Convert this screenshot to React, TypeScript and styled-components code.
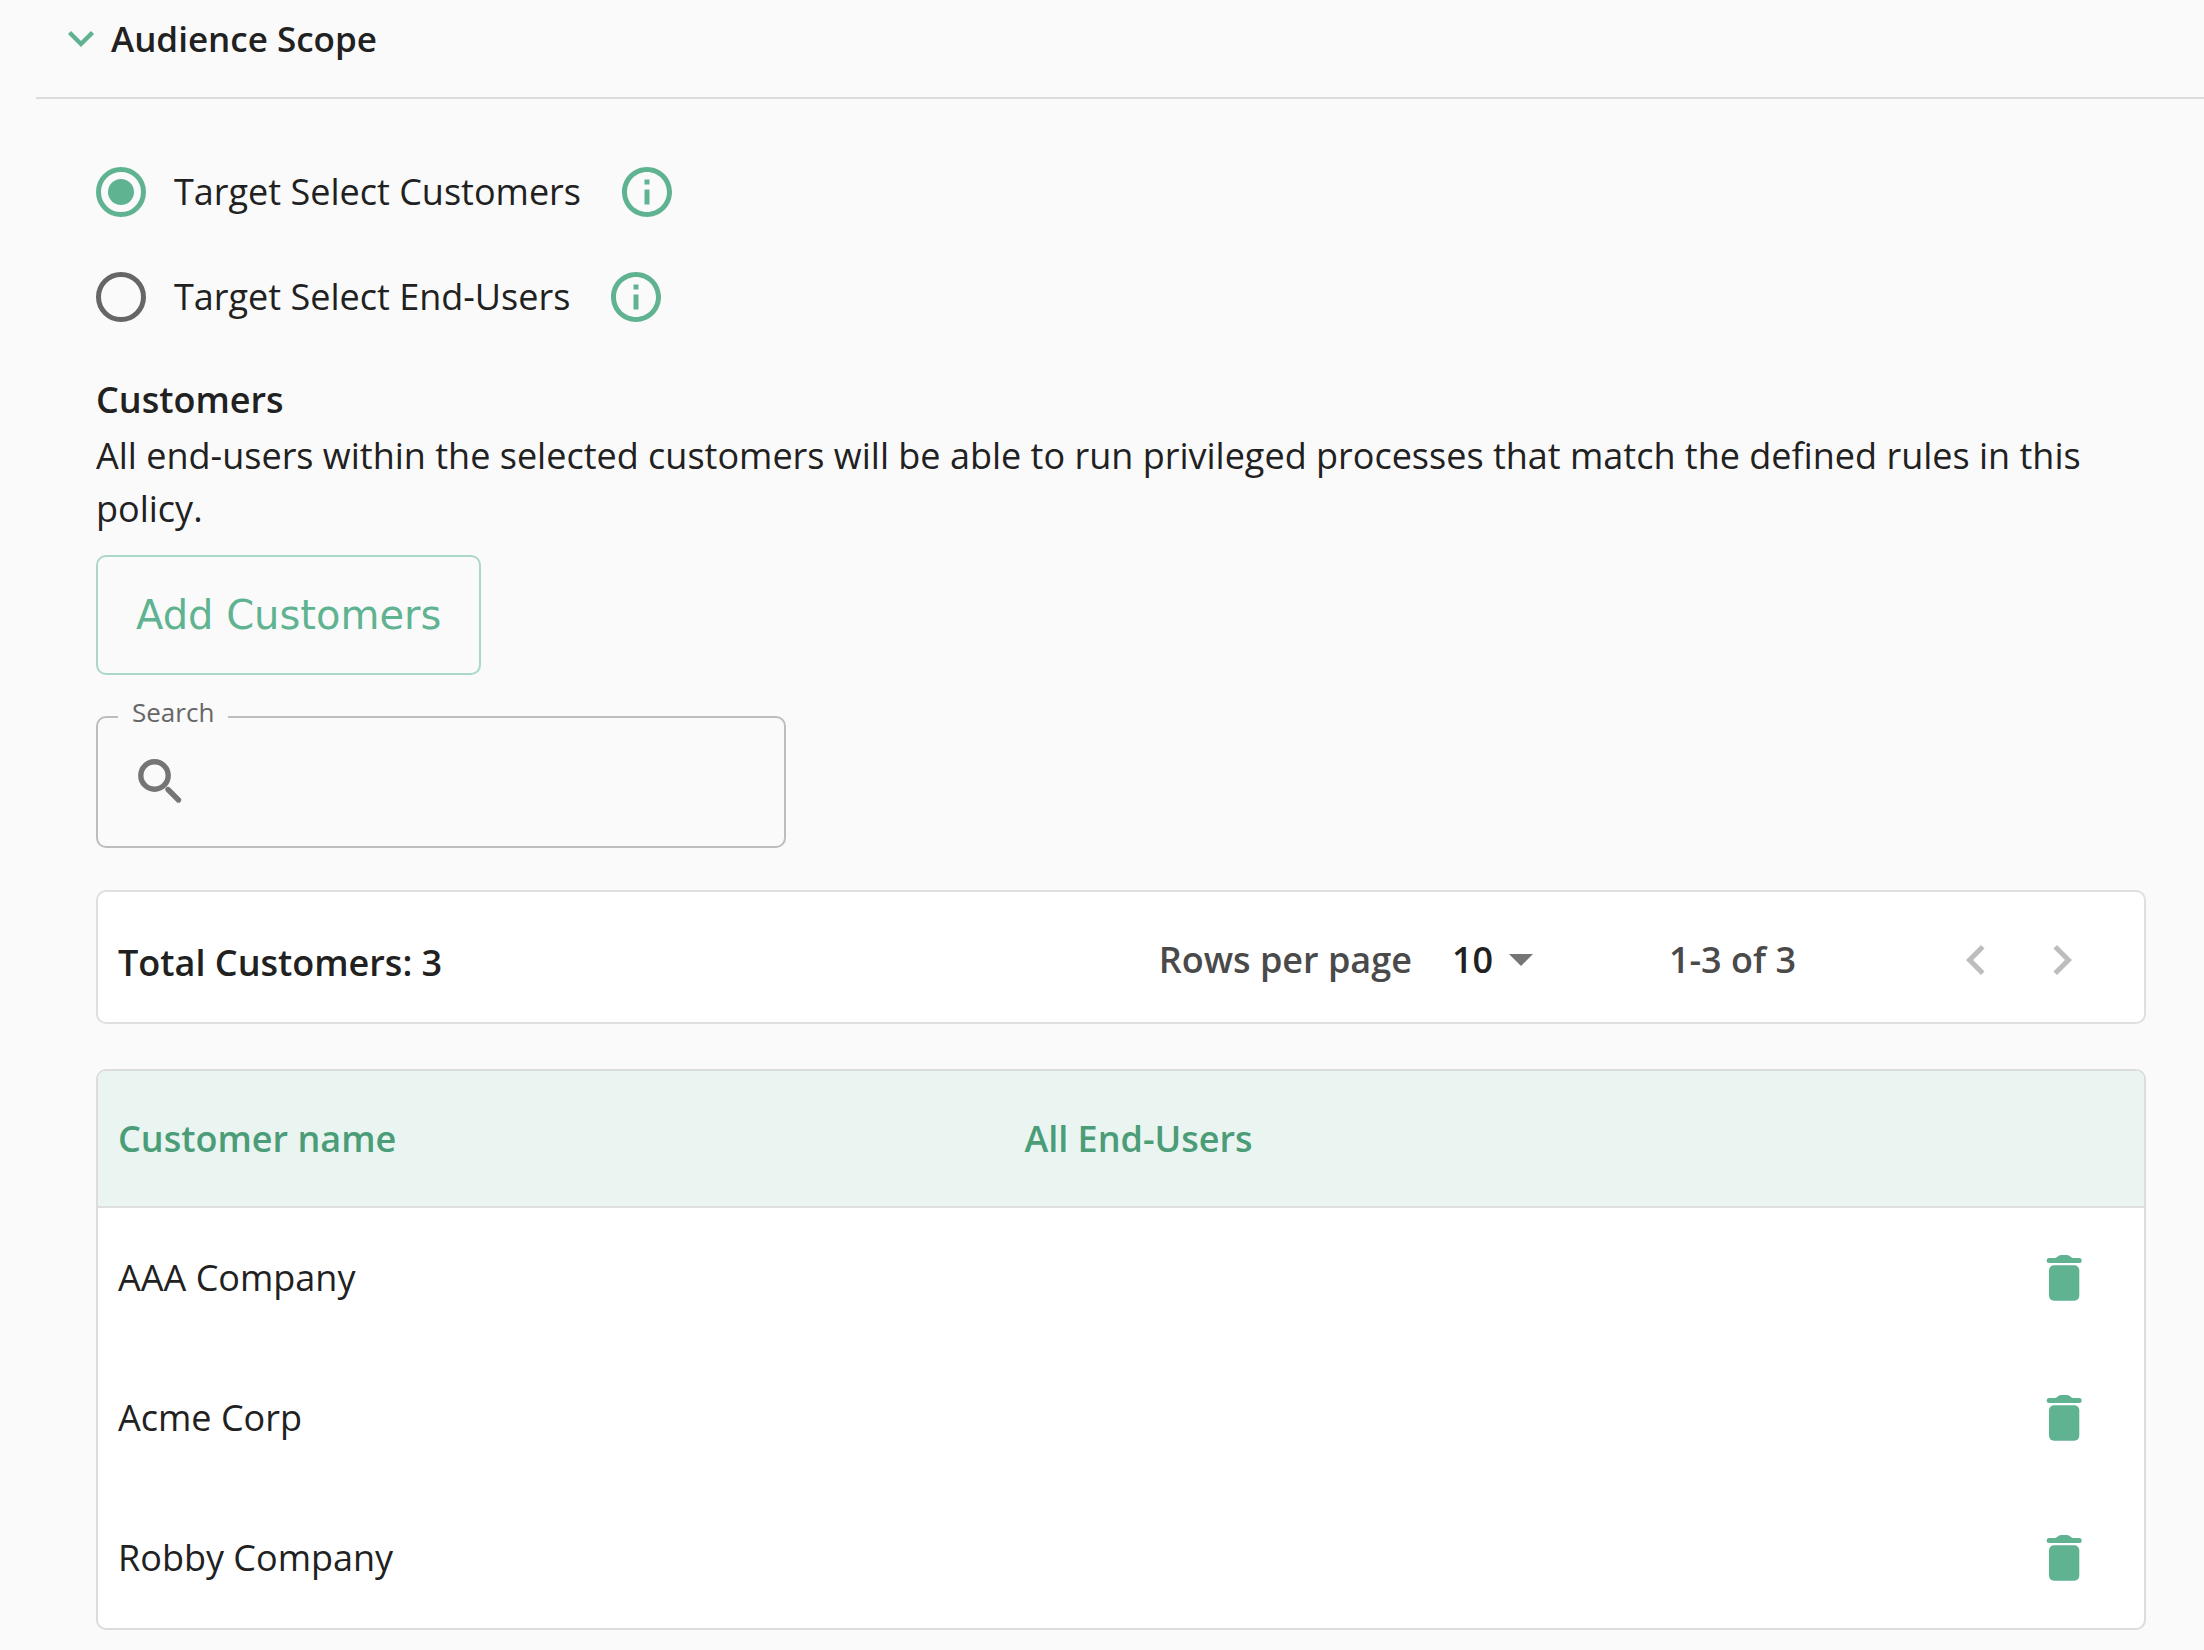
import React, { useState } from "react";
import styled, { createGlobalStyle } from "styled-components";

const green = "#60b391";
const ink = "#212121";

const GlobalStyle = createGlobalStyle`
  *, *::before, *::after { box-sizing: border-box; }
  body {
    margin: 0;
    background: #fafafa;
    color: ${ink};
    font-family: "Open Sans", "Noto Sans", sans-serif;
    font-size: 36px;
    line-height: 54px;
  }
  button, input, select { font: inherit; color: inherit; margin: 0; }
`;

const Page = styled.main`
  padding-left: 36px;
`;

const SectionHeader = styled.header`
  display: flex;
  height: 99px;
  padding: 12px 24px 0 30px;
  border-bottom: 2px solid #dcdcdc;
`;

const SectionTitle = styled.h2`
  margin: 0;
  font-size: 35px;
  line-height: 54px;
  font-weight: 600;
`;

const Toggle = styled.button`
  display: flex;
  align-items: center;
  gap: 15px;
  padding: 0;
  border: 0;
  background: none;
  cursor: pointer;

  & > svg { color: ${green}; }
`;

const Content = styled.div`
  padding: 63px 58px 20px 60px;
`;

const Options = styled.fieldset`
  display: grid;
  gap: 45px;
  margin: 0 0 46px;
  padding: 0;
  border: 0;
`;

const Option = styled.div`
  display: flex;
  align-items: center;
  gap: 36px;
  height: 60px;
`;

const OptionLabel = styled.label`
  display: flex;
  align-items: center;
  gap: 28px;
  cursor: pointer;
`;

const Radio = styled.input`
  appearance: none;
  display: grid;
  place-items: center;
  width: 50px;
  height: 50px;
  border: 5px solid #666666;
  border-radius: 50%;

  &:checked { border-color: ${green}; }
  &:checked::before {
    content: "";
    width: 26px;
    height: 26px;
    border-radius: 50%;
    background: ${green};
  }
`;

const IconButton = styled.button`
  display: grid;
  place-items: center;
  padding: 0;
  border: 0;
  background: none;
  color: ${green};

  &:disabled { color: #bdbdbd; }
`;

const Title = styled.h3`
  margin: 0 0 2px;
  font-size: 36px;
  line-height: 54px;
  font-weight: 600;
`;

const Description = styled.p`
  margin: 0 0 20px;
  line-height: 53px;
`;

const AddButton = styled.button`
  display: block;
  height: 120px;
  padding: 0 38px;
  border: 2px solid #abd8c6;
  border-radius: 10px;
  background: none;
  color: ${green};
  font-family: "DejaVu Sans", sans-serif;
  font-size: 40px;
`;

const SearchBox = styled.fieldset`
  display: flex;
  align-items: center;
  width: 690px;
  height: 151px;
  margin: 22px 0 42px;
  padding: 0 20px 20px 34px;
  border: 2px solid #bdbdbd;
  border-radius: 10px;
  color: #757575;
`;

const SearchLegend = styled.legend`
  margin-left: -14px;
  padding: 0 14px 10px;
  color: #666666;
  font-size: 26px;
  line-height: 30px;
`;

const SearchInput = styled.input`
  flex: 1;
  min-width: 0;
  padding: 0 16px;
  border: 0;
  outline: 0;
  background: none;
`;

const Pager = styled.div`
  display: flex;
  align-items: center;
  height: 134px;
  padding: 6px 52px 0 20px;
  border: 2px solid #dfdfdf;
  border-radius: 10px;
  background: #ffffff;
  font-weight: 600;
`;

const Total = styled.span`
  flex: 1;
  padding-top: 6px;
`;

const RowsLabel = styled.label`
  color: #4a4a4a;
`;

const SelectWrap = styled.span`
  display: flex;
  align-items: center;
  margin: 0 136px 0 40px;
`;

const RowsSelect = styled.select`
  appearance: none;
  width: 57px;
  padding: 0;
  border: 0;
  background: none;
`;

const Range = styled.span`
  color: #4a4a4a;
`;

const PagerButtons = styled.div`
  display: flex;
  gap: 26px;
  margin-left: 150px;
`;

const TableFrame = styled.div`
  margin-top: 45px;
  overflow: hidden;
  border: 2px solid #dcdcdc;
  border-radius: 10px;
  background: #ffffff;
`;

const Table = styled.table`
  width: 100%;
  border-collapse: separate;
  border-spacing: 0;
  table-layout: fixed;
`;

const HeadCell = styled.th<{ $width?: string }>`
  width: ${(p) => p.$width ?? "auto"};
  height: 137px;
  padding: 0 20px;
  border-bottom: 2px solid #dfdfdf;
  background: #eaf4f0;
  color: #4b9d78;
  font-weight: 600;
  text-align: left;
`;

const Cell = styled.td`
  height: 140px;
  padding: 0 20px;
`;

const ActionCell = styled(Cell)`
  padding: 0 50px 0 0;

  & > button { margin-left: auto; }
`;

const InfoIcon = () => (
  <svg width="60" height="60" viewBox="0 0 24 24" fill="currentColor" aria-hidden="true">
    <path d="M11 7h2v2h-2zm0 4h2v6h-2zm1-9C6.48 2 2 6.48 2 12s4.48 10 10 10 10-4.48 10-10S17.52 2 12 2zm0 18c-4.41 0-8-3.59-8-8s3.59-8 8-8 8 3.59 8 8-3.59 8-8 8z" />
  </svg>
);

const SearchIcon = () => (
  <svg
    width="60"
    height="60"
    viewBox="0 0 60 60"
    fill="none"
    stroke="currentColor"
    strokeWidth="5.4"
    strokeLinecap="round"
    aria-hidden="true"
  >
    <circle cx="22.5" cy="23.5" r="13.7" />
    <path d="M36 37.500L46.500 48" />
  </svg>
);

const TrashIcon = () => (
  <svg width="60" height="60" viewBox="0 0 60 60" fill="currentColor" aria-hidden="true">
    <path d="M15.200 10h5.800q1 0 2-1 2-2 4-2h6q2 0 4 2 1 1 2 1h6.200a2.500 2.500 0 0 1 0 5h-30a2.500 2.500 0 0 1 0-5z" />
    <rect x="15" y="17.300" width="30.300" height="35.400" rx="5" />
  </svg>
);

const ExpandIcon = () => (
  <svg width="30" height="20" viewBox="0 0 30 20" fill="none" stroke="currentColor" strokeWidth="4.4" aria-hidden="true">
    <path d="M3.500 3.500L15 15 26.500 3.500" />
  </svg>
);

const PreviousIcon = () => (
  <svg width="60" height="60" viewBox="0 0 24 24" fill="currentColor" aria-hidden="true">
    <path d="M15.410 7.410L14 6l-6 6 6 6 1.410-1.410L10.830 12z" />
  </svg>
);

const NextIcon = () => (
  <svg width="60" height="60" viewBox="0 0 24 24" fill="currentColor" aria-hidden="true">
    <path d="M10 6L8.590 7.410 13.170 12l-4.580 4.590L10 18l6-6z" />
  </svg>
);

const options = [
  { id: "customers", label: "Target Select Customers" },
  { id: "end-users", label: "Target Select End-Users" },
];

const customers = ["AAA Company", "Acme Corp", "Robby Company"];

export default function App() {
  const [target, setTarget] = useState("customers");
  const [query, setQuery] = useState("");

  return (
    <Page>
      <GlobalStyle />
      <SectionHeader>
        <SectionTitle>
          <Toggle type="button" aria-expanded="true">
            <ExpandIcon />
            Audience Scope
          </Toggle>
        </SectionTitle>
      </SectionHeader>

      <Content>
        <Options aria-label="Audience">
          {options.map((o) => (
            <Option key={o.id}>
              <OptionLabel>
                <Radio
                  type="radio"
                  name="target"
                  checked={target === o.id}
                  onChange={() => setTarget(o.id)}
                />
                {o.label}
              </OptionLabel>
              <IconButton type="button" aria-label={`About ${o.label}`}>
                <InfoIcon />
              </IconButton>
            </Option>
          ))}
        </Options>

        <Title>Customers</Title>
        <Description>
          All end-users within the selected customers will be able to run privileged processes that
          match the defined rules in this policy.
        </Description>
        <AddButton type="button">Add Customers</AddButton>

        <SearchBox>
          <SearchLegend>
            <label htmlFor="search">Search</label>
          </SearchLegend>
          <SearchIcon />
          <SearchInput id="search" value={query} onChange={(e) => setQuery(e.target.value)} />
        </SearchBox>

        <Pager>
          <Total>Total Customers: {customers.length}</Total>
          <RowsLabel htmlFor="rows">Rows per page</RowsLabel>
          <SelectWrap>
            <RowsSelect id="rows" defaultValue="10">
              <option>10</option>
              <option>25</option>
            </RowsSelect>
            <svg width="24" height="12" viewBox="0 0 24 12" fill="#757575" aria-hidden="true">
              <path d="M0 0h24L12 12z" />
            </svg>
          </SelectWrap>
          <Range>1-3 of 3</Range>
          <PagerButtons>
            <IconButton type="button" disabled aria-label="Previous page">
              <PreviousIcon />
            </IconButton>
            <IconButton type="button" disabled aria-label="Next page">
              <NextIcon />
            </IconButton>
          </PagerButtons>
        </Pager>

        <TableFrame>
          <Table>
            <thead>
              <tr>
                <HeadCell $width="44.3%">Customer name</HeadCell>
                <HeadCell>All End-Users</HeadCell>
                <HeadCell $width="160px" aria-label="Actions" />
              </tr>
            </thead>
            <tbody>
              {customers.map((name) => (
                <tr key={name}>
                  <Cell>{name}</Cell>
                  <Cell />
                  <ActionCell>
                    <IconButton type="button" aria-label={`Remove ${name}`}>
                      <TrashIcon />
                    </IconButton>
                  </ActionCell>
                </tr>
              ))}
            </tbody>
          </Table>
        </TableFrame>
      </Content>
    </Page>
  );
}
